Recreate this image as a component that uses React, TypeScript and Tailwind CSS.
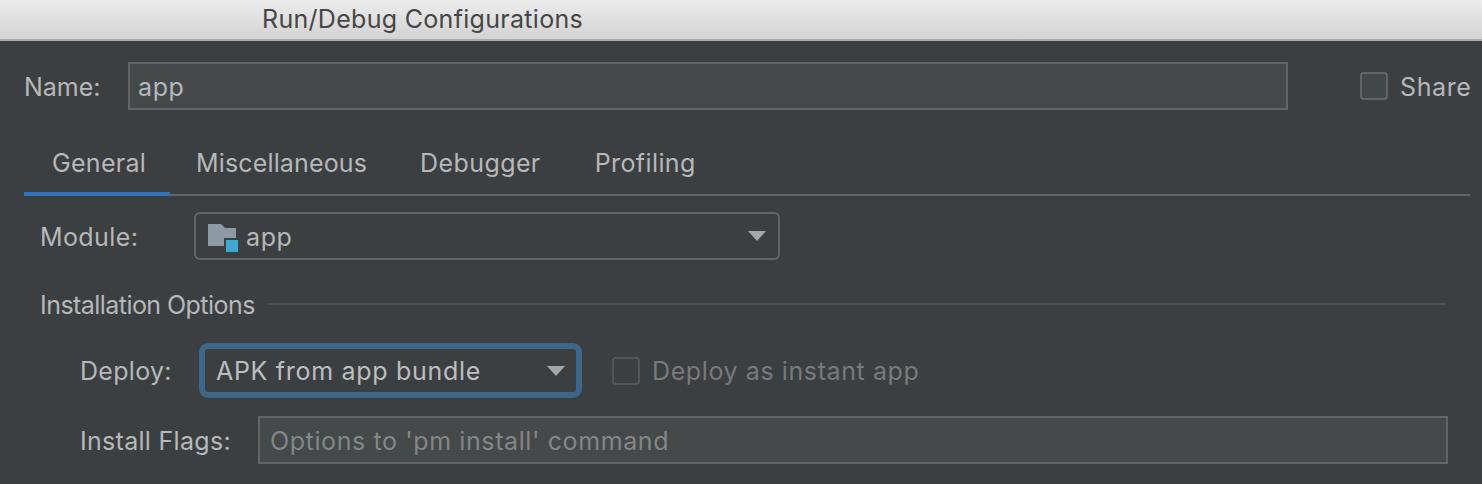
const font = "font-['Inter','Liberation_Sans',sans-serif]";

function ModuleIcon() {
  return (
    <svg width="30" height="28" viewBox="0 0 30 28" className="shrink-0 mt-[4px]">
      <path d="M0 0H13L17 4H28V22H0Z" fill="#8c9aa4" />
      <rect x="16" y="14" width="14" height="14" fill="#3c3f41" />
      <rect x="18" y="16" width="12" height="12" fill="#3fa9d2" />
    </svg>
  );
}

function Arrow() {
  return (
    <svg width="18" height="10" viewBox="0 0 18 10" className="shrink-0">
      <path d="M0 0H18L9 10Z" fill="#a4a6a8" />
    </svg>
  );
}

function Tab({ label, active, className }: { label: string; active?: boolean; className: string }) {
  return (
    <div className={`h-[54px] -mb-[2px] pt-[6px] border-b-[4px] ${active ? 'border-[#3574b8]' : 'border-transparent'} ${className}`}>
      {label}
    </div>
  );
}

export default function App() {
  return (
    <div className={`w-[1482px] h-[484px] overflow-hidden bg-[#3c3f41] text-[25px] leading-[30px] text-[#b6b8ba] ${font}`}>
      <div className="h-[41px] pl-[262px] pt-[4px] bg-gradient-to-b from-[#ececec] to-[#d3d3d3] border-b-2 border-[#a9abab] text-[#464646] tracking-[0.3px]">
        Run/Debug Configurations
      </div>

      <div className="pl-[24px] pt-[21px]">
        <div className="flex items-center">
          <span className="w-[104px] pt-[2px]">Name:</span>
          <div className="w-[1160px] h-[48px] px-[8px] pt-[2px] flex items-center bg-[#45494a] border-2 border-[#646464] tracking-[0.6px]">app</div>
          <div className="ml-[72px] w-[28px] h-[28px] rounded-[4px] bg-[#43484a] border-2 border-[#646464]" />
          <span className="ml-[12px] pt-[2px] tracking-[0.6px]">Share</span>
        </div>

        <div className="mt-[32px] flex h-[54px] w-[1446px] border-b-2 border-[#646464]">
          <Tab label="General" active className="w-[146px] pl-[28px] tracking-[0.3px]" />
          <Tab label="Miscellaneous" className="pl-[26px] pr-[26px] tracking-[0.15px]" />
          <Tab label="Debugger" className="pl-[27px] pr-[26px] tracking-[0.4px]" />
          <Tab label="Profiling" className="pl-[28px] tracking-[0.4px]" />
        </div>

        <div className="pl-[16px]">
          <div className="mt-[16px] flex items-center">
            <span className="w-[154px] pt-[2px] tracking-[0.4px]">Module:</span>
            <div className="w-[586px] h-[48px] px-[12px] flex items-center rounded-[6px] border-2 border-[#646464]">
              <ModuleIcon />
              <span className="ml-[8px] pt-[2px] flex-1 tracking-[0.6px]">app</span>
              <Arrow />
            </div>
          </div>

          <div className="mt-[30px] flex items-center">
            <span className="tracking-[-0.55px]">Installation Options</span>
            <div className="ml-[13px] mb-[2px] w-[1178px] h-[2px] bg-[#515151]" />
          </div>

          <div className="pl-[40px]">
            <div className="mt-[23px] flex items-center">
              <span className="w-[119px] tracking-[0.3px]">Deploy:</span>
              <div className="w-[383px] h-[55px] px-[11px] flex items-center rounded-[9px] border-[6px] border-[#3d6689] text-[#bcbec0]">
                <span className="flex-1 tracking-[0.7px]">APK from app bundle</span>
                <Arrow />
              </div>
              <div className="ml-[30px] w-[28px] h-[28px] rounded-[4px] border-2 border-[#535557]" />
              <span className="ml-[12px] text-[#787a7c] tracking-[0.6px]">Deploy as instant app</span>
            </div>

            <div className="mt-[18px] flex items-center">
              <span className="w-[178px] pt-[2px] tracking-[0.3px]">Install Flags:</span>
              <div className="w-[1190px] h-[48px] px-[10px] pt-[2px] flex items-center bg-[#45494a] border-2 border-[#646464] text-[#848688] tracking-[0.6px]">
                Options to 'pm install' command
              </div>
            </div>
          </div>
        </div>
      </div>
    </div>
  );
}
